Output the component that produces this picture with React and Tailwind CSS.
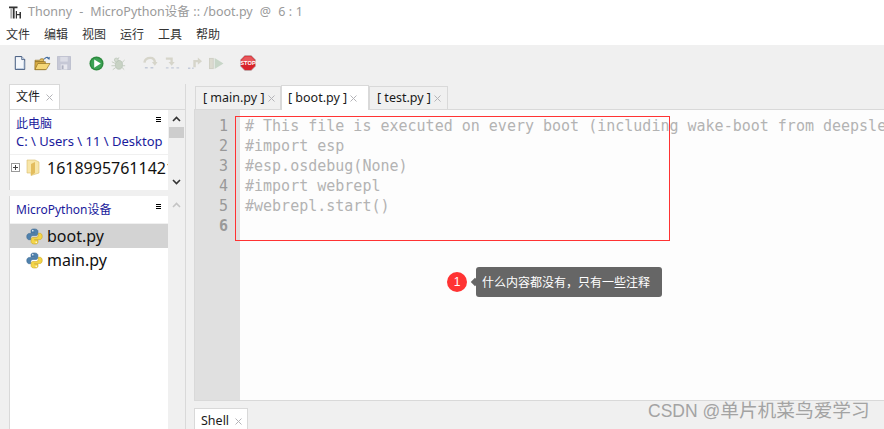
import React from "react";

const ui = "font-['Noto_Sans','Noto_Sans_CJK_SC',sans-serif]";

function Close({ className = "" }) {
  return (
    <svg width="7" height="7" viewBox="0 0 7 7" className={`shrink-0 ${className}`}>
      <path d="M0.5 0.5L6.5 6.5M6.5 0.5L0.5 6.5" stroke="#b4b4b8" strokeWidth="1" fill="none" />
    </svg>
  );
}

function PyIcon() {
  return (
    <svg width="17" height="17" viewBox="0 0 18 18" className="shrink-0">
      <path d="M8.8 1C5.6 1 5.3 2.2 5.3 3.4V5.2H9V5.8H3.4C1.8 5.8 .8 7.2 .8 9.1C.8 11.1 1.8 12.4 3.2 12.4H5V10.2C5 8.9 6 7.9 7.3 7.9H10.7C11.8 7.9 12.6 7 12.6 5.9V3.4C12.6 2 11.4 1 8.8 1Z" fill="#4f81ad" stroke="#3a668f" strokeWidth=".6" />
      <path d="M9.2 17C12.4 17 12.7 15.8 12.7 14.6V12.8H9V12.2H14.6C16.2 12.2 17.2 10.8 17.2 8.9C17.2 6.9 16.2 5.6 14.8 5.6H13V7.8C13 9.1 12 10.1 10.7 10.1H7.3C6.2 10.1 5.4 11 5.4 12.1V14.6C5.4 16 6.6 17 9.2 17Z" fill="#f4d548" stroke="#c9a51f" strokeWidth=".6" />
      <circle cx="7.2" cy="3" r=".8" fill="#fff" />
      <circle cx="10.8" cy="15" r=".8" fill="#fff" />
    </svg>
  );
}

function Tab({ label, active, width, pad }) {
  return (
    <div className={`flex items-center border border-[#d9d9d9] border-b-0 ${width} ${pad} ${active ? "bg-white h-[25px] -mb-px relative" : "bg-[#f0f0f0] h-[23px]"} gap-[3px] text-[12.5px] text-[#1a1a1a] whitespace-nowrap`}>
      <span>{label}</span>
      <Close />
    </div>
  );
}

function Toolbar() {
  return (
    <div className="h-[39px] bg-[#f0f0f0] flex items-center pl-[14px] pb-[3px]">
      {/* new file */}
      <svg width="12" height="14" viewBox="0 0 14 16">
        <path d="M1.5 .5H9L12.5 4V15.5H1.5Z" fill="#f4f7fb" stroke="#27406a" />
        <path d="M9 .5V4H12.5" fill="#cfdced" stroke="#27406a" strokeWidth=".8" />
        <path d="M3 14.5H11.5V6" fill="none" stroke="#b5c7de" />
      </svg>
      {/* open */}
      <svg width="17" height="15" viewBox="0 0 18 16" className="ml-[8px]">
        <path d="M1 4.5H6L7 3H10V6H1Z" fill="#e2c063" stroke="#8d6b1e" strokeWidth=".7" />
        <path d="M.8 14.5L1 6H12V14.5Z" fill="#d9ad45" stroke="#8d6b1e" strokeWidth=".7" />
        <path d="M1 14.5L4 8H17L13 14.5Z" fill="#f6d777" stroke="#8d6b1e" strokeWidth=".7" />
        <path d="M11 3.5C12 1.5 14 1 15.5 2" fill="none" stroke="#3f6a9e" strokeWidth="1.2" />
        <path d="M16.8 .8L16.5 4L13.8 2.8Z" fill="#3f6a9e" />
      </svg>
      {/* save */}
      <svg width="14" height="14" viewBox="0 0 15 15" className="ml-[6px]">
        <path d="M.5 .5H14.5V14.5H.5Z" fill="#c6c8d6" stroke="#bcbecd" />
        <rect x="3.5" y="1" width="8" height="5" fill="#dcdde6" />
        <rect x="4" y="9" width="7" height="5.5" fill="#e8e8ee" />
        <rect x="5" y="10" width="2" height="4" fill="#aeb0c0" />
      </svg>
      {/* run */}
      <svg width="15" height="15" viewBox="0 0 16 16" className="ml-[18px]">
        <circle cx="8" cy="8" r="7.5" fill="#2d8a3e" />
        <circle cx="8" cy="8" r="6" fill="#3ca255" />
        <path d="M5.5 3.6L12.6 8L5.5 12.4Z" fill="#fff" />
      </svg>
      {/* debug */}
      <svg width="15" height="15" viewBox="0 0 17 16" className="ml-[7px]">
        <ellipse cx="9" cy="9.5" rx="4" ry="5" fill="#c8d2c4" stroke="#b0bcae" strokeWidth=".7" />
        <circle cx="6" cy="4" r="2.2" fill="#d4dbd0" stroke="#b0bcae" strokeWidth=".6" />
        <path d="M1 6L5 8M.5 10.5H5M2 15L5.5 12.5M15.5 4L12.5 7M16 10.5H13M15 15L12.5 12.5M9 1L8 3" stroke="#c0c9bc" strokeWidth="1" fill="none" />
      </svg>
      {/* step over */}
      <svg width="15" height="14" viewBox="0 0 16 15" className="ml-[17px]">
        <path d="M1.5 7C2 3 5 2 8 2C11 2 12.5 4 12.8 7" fill="none" stroke="#d6d5ca" strokeWidth="2.6" />
        <path d="M9.5 6.5H15.5L12.7 10.5Z" fill="#d6d5ca" />
        <path d="M2 12.5H5M8 12.5H11" stroke="#c3cad8" strokeWidth="1.6" />
      </svg>
      {/* step into */}
      <svg width="15" height="14" viewBox="0 0 17 15" className="ml-[7px]">
        <path d="M1 2.5H7.5V7" fill="none" stroke="#d6d5ca" strokeWidth="2.6" />
        <path d="M4 6.5H11L7.5 10.5Z" fill="#d6d5ca" />
        <path d="M1 13H4M7 13H10M13 13H16" stroke="#c3cad8" strokeWidth="1.6" />
      </svg>
      {/* step out */}
      <svg width="16" height="14" viewBox="0 0 17 15" className="ml-[7px]">
        <path d="M8 12V5.5H12" fill="none" stroke="#d6d5ca" strokeWidth="2.6" />
        <path d="M11.5 1.5L16 5.5L11.5 9.5Z" fill="#d6d5ca" />
        <path d="M1 13H3.5M5.5 13H7" stroke="#c3cad8" strokeWidth="1.6" />
      </svg>
      {/* resume */}
      <svg width="15" height="13" viewBox="0 0 16 14" className="ml-[6px]">
        <rect x=".5" y="1.5" width="4" height="11" fill="#dcdbd0" stroke="#cfcfc4" />
        <path d="M6 1L15.5 7L6 13Z" fill="#c8d6c8" />
      </svg>
      {/* stop */}
      <svg width="16" height="16" viewBox="0 0 18 18" className="ml-[16px]">
        <path d="M5.5 .5H12.5L17.5 5.5V12.5L12.5 17.5H5.5L.5 12.5V5.5Z" fill="#d8232a" stroke="#b3b3b3" strokeWidth=".8" />
        <path d="M5.8 1.8H12.2L16.2 5.8V8H1.8V5.8Z" fill="#e8585c" />
        <text x="9" y="11.2" textAnchor="middle" fontSize="6.4" fontWeight="700" fill="#fff" fontFamily="Liberation Sans">STOP</text>
      </svg>
    </div>
  );
}

const code = [
  "# This file is executed on every boot (including wake-boot from deepsleep)",
  "#import esp",
  "#esp.osdebug(None)",
  "#import webrepl",
  "#webrepl.start()",
  "",
];

export default function App() {
  return (
    <div className={`relative w-[884px] h-[429px] overflow-hidden flex flex-col bg-[#f0f0f0] ${ui}`}>
      {/* title */}
      <div className="h-[25px] bg-white flex items-center pl-[9px] gap-[6px]">
        <svg width="13" height="13" viewBox="0 0 13 13" className="shrink-0">
          <path d="M0 .5H8.5V2.2H5.6V12.5H3.8V2.2H0Z" fill="#333" />
          <path d="M1.6 2.6H2.6V12.5H1.6Z" fill="#777" />
          <path d="M6.8 5H8V8H10.5V6H12V12.5H10.5V9.2H8V12.5H6.8Z" fill="#333" />
        </svg>
        <span className="text-[12.5px] text-[#9a9a9a] whitespace-pre [word-spacing:0.3px]">Thonny  -  MicroPython设备 :: /boot.py  @  6 : 1</span>
      </div>
      {/* menu */}
      <div className="h-[20px] bg-white flex items-center pl-[6px] gap-[14px] text-[12px] text-[#333]">
        {["文件", "编辑", "视图", "运行", "工具", "帮助"].map((m) => (
          <span key={m}>{m}</span>
        ))}
      </div>
      <Toolbar />
      {/* main */}
      <div className="flex-1 min-h-0 flex">
        {/* left */}
        <div className="w-[177px] ml-[9px] shrink-0 flex flex-col border-r border-[#d9d9d9]">
          <div className="h-[25px] flex">
            <div className="w-[51px] h-[25px] bg-white border border-[#d9d9d9] border-b-0 flex items-center pl-[6px] gap-[6px] text-[12px] text-[#1a1a1a]">
              <span>文件</span>
              <Close />
            </div>
          </div>
          <div className="flex-1 min-h-0 flex flex-col">
            {/* this computer */}
            <div className="h-[81px] shrink-0 flex border-t border-[#d9d9d9]">
              <div className="w-[159px] bg-white border-l border-[#d9d9d9] flex flex-col overflow-hidden">
                <div className="h-[45px] shrink-0 border-b border-[#f0f0f0] pl-[6px] pt-[5px] relative text-[#1a1a9c] leading-[18px]">
                  <div className="text-[12px]">此电脑</div>
                  <div className="mt-[-1px] whitespace-nowrap text-[13px]">C: \ Users \ 11 \ Desktop</div>
                  <div className="absolute right-[7px] top-[7px] w-[5px] flex flex-col gap-[1px]">
                    <div className="h-px bg-black" /><div className="h-px bg-black" /><div className="h-px bg-black" />
                  </div>
                </div>
                <div className="flex items-center h-[25px] shrink-0 pl-[1px] text-[16px] text-[#111] whitespace-nowrap">
                  <svg width="9" height="9" viewBox="0 0 9 9" className="shrink-0">
                    <rect x=".5" y=".5" width="8" height="8" fill="#fff" stroke="#9a9a9a" />
                    <path d="M2 4.5H7M4.5 2V7" stroke="#444" />
                  </svg>
                  <svg width="14" height="17" viewBox="0 0 14 17" className="ml-[6px] shrink-0">
                    <path d="M1 1H9L13 3V14L5 16.5V14H1Z" fill="#f8e6a8" stroke="#d8bd6c" strokeWidth=".6" />
                    <path d="M5 5L9 3V14L5 16.5Z" fill="#e3bd5e" />
                  </svg>
                  <span className="ml-[7px]">16189957611421</span>
                </div>
              </div>
              <div className="w-[17px] flex flex-col items-center bg-[#f0f0f0]">
                <svg width="9" height="6" viewBox="0 0 9 6" className="mt-[6px]"><path d="M1 5L4.5 1.5L8 5" fill="none" stroke="#333" strokeWidth="1.6" /></svg>
                <div className="w-[15px] h-[11px] bg-[#cdcdcd] mt-[5px]" />
                <svg width="9" height="6" viewBox="0 0 9 6" className="mt-[41px]"><path d="M1 1L4.5 4.5L8 1" fill="none" stroke="#333" strokeWidth="1.6" /></svg>
              </div>
            </div>
            <div className="h-[6px] shrink-0" />
            {/* device */}
            <div className="flex-1 min-h-0 flex">
              <div className="w-[159px] bg-white border-l border-[#d9d9d9] flex flex-col overflow-hidden">
                <div className="h-[28px] shrink-0 pl-[6px] flex items-center relative text-[#1a1a9c] text-[12px] border-b border-[#f0f0f0]">
                  <span>MicroPython设备</span>
                  <div className="absolute right-[7px] top-[8px] w-[5px] flex flex-col gap-[1px]">
                    <div className="h-px bg-black" /><div className="h-px bg-black" /><div className="h-px bg-black" />
                  </div>
                </div>
                <div className="h-[24px] shrink-0 bg-[#d3d3d3] flex items-center pl-[16px] gap-[4px] text-[16px] text-[#111]">
                  <PyIcon /><span>boot.py</span>
                </div>
                <div className="h-[24px] shrink-0 flex items-center pl-[16px] gap-[4px] text-[16px] text-[#111]">
                  <PyIcon /><span>main.py</span>
                </div>
              </div>
              <div className="w-[17px] flex justify-center">
                <svg width="9" height="6" viewBox="0 0 9 6" className="mt-[6px]"><path d="M1 5L4.5 1.5L8 5" fill="none" stroke="#c4c4c4" strokeWidth="1.6" /></svg>
              </div>
            </div>
          </div>
        </div>
        {/* right */}
        <div className="flex-1 min-w-0 ml-[8px] flex flex-col">
          <div className="h-[25px] shrink-0 flex items-end pl-px">
            <Tab label="[ main.py ]" width="w-[86px]" pad="pl-[7px]" />
            <Tab label="[ boot.py ]" width="w-[88px]" pad="pl-[6px]" active />
            <Tab label="[ test.py ]" width="w-[79px]" pad="pl-[7px]" />
          </div>
          <div className="h-[292px] shrink-0 flex border-t border-b border-l border-[#d9d9d9] bg-[#fdfdfd] overflow-hidden">
            <div className="w-[45px] shrink-0 bg-[#e0e0e0] pt-[6px] pr-[12px] text-right font-['DejaVu_Sans_Mono',monospace] text-[15px] leading-[20px] text-[#999]">
              {[1, 2, 3, 4, 5, 6].map((n) => (
                <div key={n} className={n === 6 ? "font-bold" : ""}>{n}</div>
              ))}
            </div>
            <div className="flex-1 min-w-0 pt-[6px] pl-[5px] font-['DejaVu_Sans_Mono',monospace] text-[15px] leading-[20px] text-[#b3b3b3] whitespace-pre overflow-hidden">
              {code.map((l, i) => (
                <div key={i} className="h-[20px]">{l}</div>
              ))}
            </div>
          </div>
          <div className="h-[7px] shrink-0" />
          <div className="flex">
            <div className="w-[54px] h-[25px] bg-white border border-[#d9d9d9] border-b-0 flex items-center pl-[6px] gap-[6px] text-[12.5px] text-[#1a1a1a]">
              <span>Shell</span>
              <Close />
            </div>
          </div>
        </div>
      </div>

      {/* annotations */}
      <div className="absolute left-[235px] top-[116px] w-[435px] h-[125px] border border-[#ff3333]" />
      <div className="absolute left-[447px] top-[272px] w-[20px] h-[20px] rounded-full bg-[#ff3333] text-white text-[12px] flex items-center justify-center font-['Liberation_Sans',sans-serif]">1</div>
      <div className="absolute left-[472px] top-[279px] w-[6px] h-[6px] bg-[#666] rotate-45" />
      <div className="absolute left-[476px] top-[267px] w-[186px] h-[30px] rounded-[3px] bg-[#666] text-white text-[12px] flex items-center pl-[6px] font-['Noto_Sans_CJK_SC',sans-serif]">什么内容都没有，只有一些注释</div>
      <div className="absolute left-[648px] top-[399px] leading-[24px] text-[#a3a3a3] font-['Liberation_Sans','Noto_Sans_CJK_SC',sans-serif] whitespace-nowrap">
        <span className="text-[17.5px]">CSDN @</span>
        <span className="text-[18.7px]">单片机菜鸟爱学习</span>
      </div>
    </div>
  );
}
